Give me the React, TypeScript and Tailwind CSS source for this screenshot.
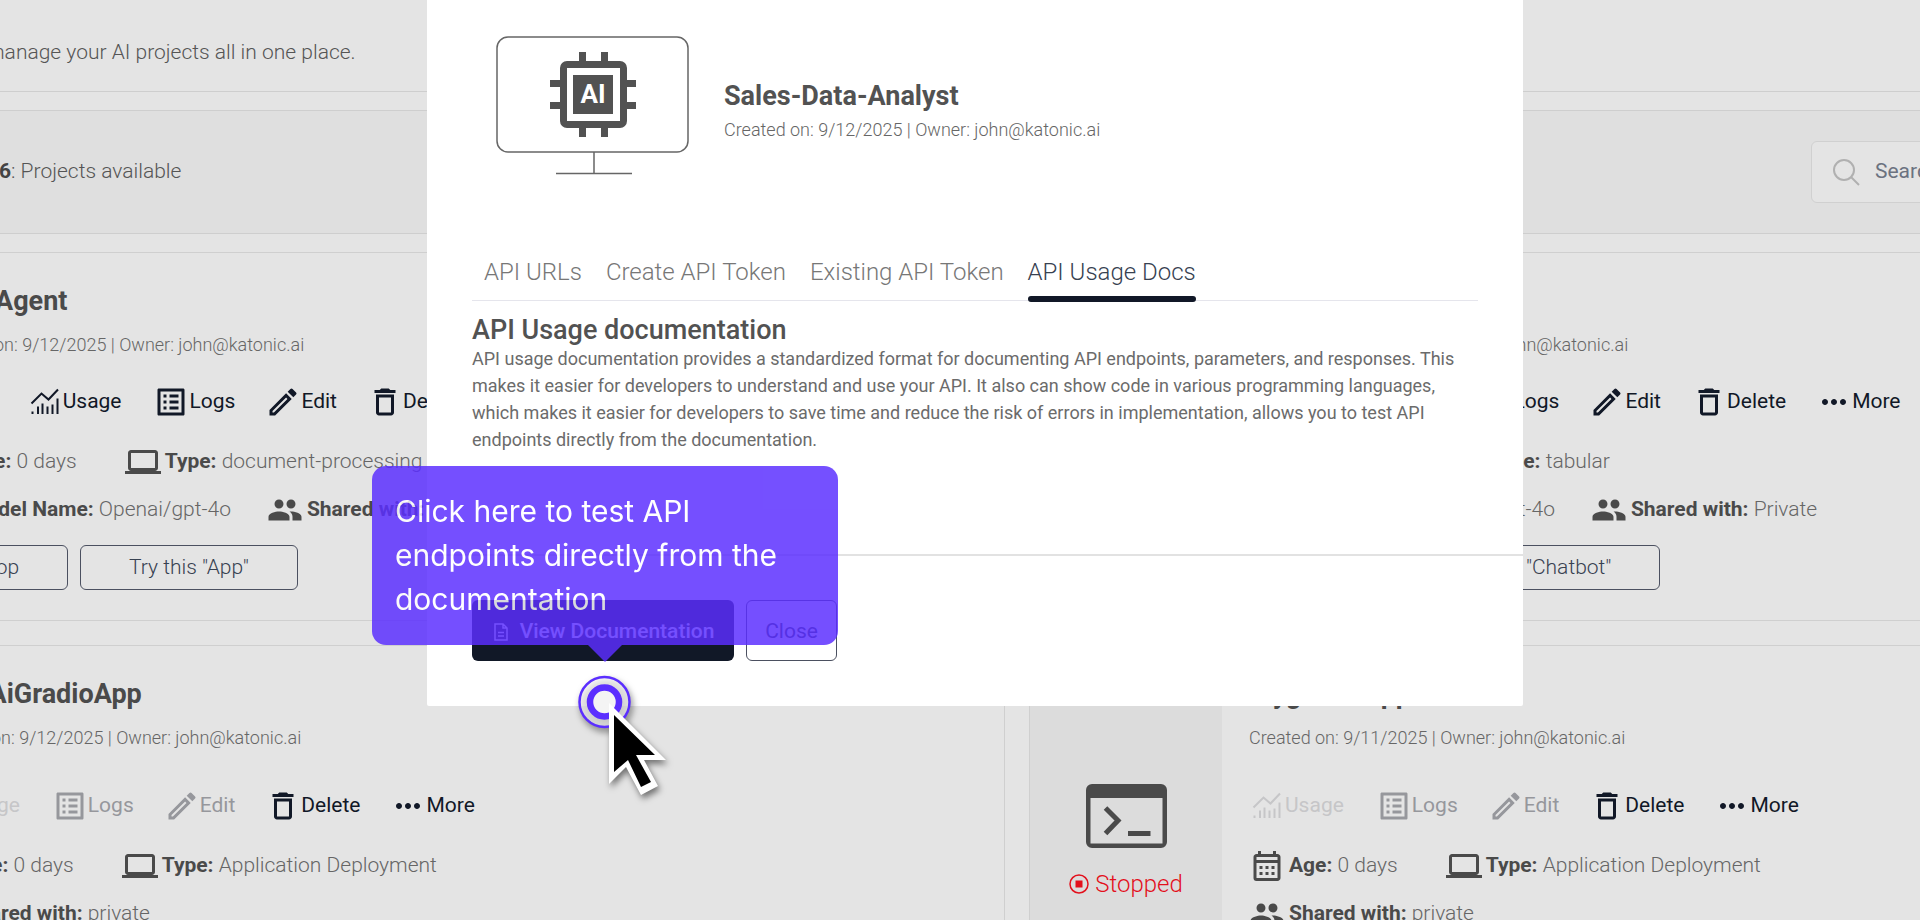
import React from 'react';
import {
    MdDeleteOutline,
    MdLaptop,
    MdMoreHoriz,
    MdOutlineCalendarMonth,
    MdOutlineListAlt,
    MdOutlineModeEdit,
    MdOutlinePsychology,
    MdPeople,
    MdOutlineApi
} from 'react-icons/md';

type Project = {
    title: string;
    created: string;
    type: string;
    model?: string;
    sharedWith: string;
    tryLabel?: string;
    stopped?: boolean;
};

const projects: Project[] = [
    { title: 'Chat-Agent', created: '9/12/2025', type: 'document-processing', model: 'Openai/gpt-4o', sharedWith: 'Private', tryLabel: 'Try this "App"' },
    { title: 'Sales-Data-Analyst', created: '9/12/2025', type: 'tabular', model: 'Openai/gpt-4o', sharedWith: 'Private', tryLabel: 'Try this "Chatbot"' },
    { title: 'OpenAiGradioApp', created: '9/12/2025', type: 'Application Deployment', sharedWith: 'private', stopped: true },
    { title: 'MygradioApp', created: '9/11/2025', type: 'Application Deployment', sharedWith: 'private', stopped: true },
];

const UsageIcon = () => (
    <svg viewBox="0 0 36 36" className="size-9" fill="none" stroke="currentColor" strokeWidth="2">
        <path d="M4.500 19.500 14.500 9.500 21.500 15.500 31 5.500" />
        <path d="M5.500 27.500V30M11 22.500V30M15.500 19.500V30M20.500 22.500V30M25.500 20.500V30M30.500 14.500V30" />
    </svg>
);

const TerminalIcon = () => (
    <svg viewBox="0 0 81 64" className="w-[81px] h-16" fill="none">
        <path fillRule="evenodd" fill="#4a4a4a" d="M6 0h69a6 6 0 0 1 6 6v52a6 6 0 0 1-6 6H6a6 6 0 0 1-6-6V6a6 6 0 0 1 6-6ZM4.500 14v45.500h72V14Z" />
        <path d="M19.500 24 32 36.500 19.500 49.500" stroke="#4a4a4a" strokeWidth="5" />
        <path d="M42 49.500h22.500" stroke="#4a4a4a" strokeWidth="5" />
    </svg>
);

const MonitorIcon = () => (
    <svg viewBox="0 0 194 140" className="w-[194px] h-[140px]" fill="none">
        <g stroke="#666" strokeWidth="1.500">
            <rect x="1" y="1" width="191" height="115" rx="11" fill="#fff" />
            <path d="M98 116v21M60 137.500h76" />
        </g>
        <g fill="#525252">
            <path d="M83 16h7v12h-7zM105 16h7v12h-7zM83 88h7v13h-7zM105 88h7v13h-7zM54 44h12v7H54zM54 66h12v7H54zM128 44h12v7h-12zM128 66h12v7h-12z" />
            <path fillRule="evenodd" d="M71 25h53a7 7 0 0 1 7 7v53a7 7 0 0 1-7 7H71a7 7 0 0 1-7-7V32a7 7 0 0 1 7-7ZM71 32v53h53V32Z" />
            <path d="M77 39h40v39H77z" />
        </g>
        <text x="97" y="67" textAnchor="middle" fill="#fff" className="font-['Roboto',sans-serif] text-[26px] font-bold">AI</text>
    </svg>
);

type ActionProps = {
    icon: React.ReactNode;
    label: string;
    className?: string;
}

const Action = ({ icon, label, className = 'text-[#111827]' }: ActionProps) => (
    <button className={`flex items-center h-9 text-[21px] ${className}`}>
        {icon}
        {label}
    </button>
);

type DetailProps = {
    icon: React.ReactNode;
    label: string;
    value: string;
}

const Detail = ({ icon, label, value }: DetailProps) => (
    <div className="flex items-center gap-1 h-9 whitespace-nowrap text-[21px] font-light text-[#666]">
        {icon}
        <span><b className="font-bold text-[#4a4a4a]">{label}:</b> {value}</span>
    </div>
);

const ProjectCard = ({ project }: { project: Project }) => {
    const { stopped } = project;

    return (
        <section className="flex border border-[#cfcfcf] bg-[#e4e4e4] min-h-[369px]">

            <div className="flex flex-col items-center w-48 shrink-0 bg-[#dcdcdc] pt-[138px]">
                <TerminalIcon />
                {stopped && (
                    <div className="flex items-center gap-1.5 mt-5 text-2xl font-light text-[#e3101c]">
                        <svg viewBox="0 0 20 20" className="size-5" fill="none">
                            <circle cx="10" cy="10" r="9" stroke="currentColor" strokeWidth="1.500" />
                            <path d="M6.500 6.500h7v7h-7z" fill="currentColor" />
                        </svg>
                        Stopped
                    </div>
                )}
            </div>

            <div className={stopped ? 'pt-8 pl-[27px]' : 'pt-8 pl-[30px]'}>
                <h2 className="text-[27px] leading-8 font-bold text-[#4a4a4a]">{project.title}</h2>
                <p className="mt-4 text-lg leading-6 font-light text-[#666]">Created on: {project.created} | Owner: john@katonic.ai</p>

                <div className={`flex gap-[30px] ${stopped ? 'mt-[38px]' : 'mt-[27px]'}`}>
                    {!stopped && <Action icon={<MdOutlineApi className="size-9" />} label="API" />}
                    <Action icon={<UsageIcon />} label="Usage" className={stopped ? 'pr-0.5 text-[#c6c6c8]' : 'pr-0.5 text-[#111827]'} />
                    <Action icon={<MdOutlineListAlt className="size-9" />} label="Logs" className={stopped ? 'text-[#96979c]' : 'text-[#111827]'} />
                    <Action icon={<MdOutlineModeEdit className="size-9" />} label="Edit" className={stopped ? 'text-[#96979c]' : 'text-[#111827]'} />
                    <Action icon={<MdDeleteOutline className="size-9" />} label="Delete" />
                    <Action icon={<MdMoreHoriz className="size-9" />} label="More" />
                </div>

                <div className="flex gap-12 mt-6">
                    <Detail icon={<MdOutlineCalendarMonth className="size-9 text-[#4a4a4a]" />} label="Age" value="0 days" />
                    <Detail icon={<MdLaptop className="size-9 text-[#4a4a4a]" />} label="Type" value={project.type} />
                </div>

                <div className="flex gap-9 mt-3">
                    {project.model && (
                        <Detail icon={<MdOutlinePsychology className="size-9 text-[#4a4a4a]" />} label="Model Name" value={project.model} />
                    )}
                    <Detail icon={<MdPeople className="size-9 text-[#4a4a4a]" />} label="Shared with" value={project.sharedWith} />
                </div>

                {project.tryLabel && (
                    <div className="flex gap-3 mt-[17px] text-[21px] font-light text-[#374151]">
                        <button className="w-[140px] h-[45px] rounded-md border border-[#4b5060]">Stop</button>
                        <button className="h-[45px] px-12 rounded-md border border-[#4b5060]">{project.tryLabel}</button>
                    </div>
                )}
            </div>

        </section>
    );
};

const tabs = ['API URLs', 'Create API Token', 'Existing API Token', 'API Usage Docs'];

const ApiDialog = () => (
    <div role="dialog" aria-label="Sales-Data-Analyst" className="w-[1096px] h-[706px] rounded-b-xs bg-white text-[#525252]">

        <div className="flex gap-[34px] pt-9 px-[69px]">
            <MonitorIcon />
            <div className="pt-11">
                <h2 className="text-[27px] leading-8 font-bold">Sales-Data-Analyst</h2>
                <p className="mt-1.5 text-lg leading-6 font-light text-[#666]">Created on: 9/12/2025 | Owner: john@katonic.ai</p>
            </div>
        </div>

        <div className="px-[45px] pt-[76px]">
            <div role="tablist" className="flex gap-6 h-[49px] pl-3 border-b border-[#e5e5ec]">
                {tabs.map((tab) => (
                    <button
                        key={tab}
                        role="tab"
                        aria-selected={tab === 'API Usage Docs'}
                        className="group flex flex-col justify-between h-[50px] pt-1 text-2xl font-light text-[#777] aria-selected:text-[#374151]"
                    >
                        {tab}
                        <span className="w-full h-1.5 rounded-full group-aria-selected:bg-[#111827]" />
                    </button>
                ))}
            </div>
            <h3 className="mt-[13px] text-[27px] leading-8 font-medium">API Usage documentation</h3>
            <p className="-mt-px text-lg leading-[27px] text-[#6b6b6b]">
                API usage documentation provides a standardized format for documenting API endpoints, parameters, and responses. This makes it easier for developers to understand and use your API. It also can show code in various programming languages, which makes it easier for developers to save time and reduce the risk of errors in implementation, allows you to test API endpoints directly from the documentation.
            </p>
        </div>

        <div className="flex gap-3 mt-[101px] px-[45px] pt-11 border-t-2 border-[#e2e2e2] text-[21px]">
            <button className="flex items-center justify-center gap-3 w-[262px] h-[61px] pt-0.5 pl-0.5 rounded-md bg-[#111827] text-white font-medium">
                <svg viewBox="0 0 14 18" className="w-3.5 h-[18px]" fill="none" stroke="currentColor" strokeWidth="1.500">
                    <path d="M1 1h8l4 4v12H1zM9 1v4h4M4 9.500h6M4 13h6" />
                </svg>
                View Documentation
            </button>
            <button className="w-[91px] h-[61px] pt-0.5 rounded-md border border-[#4b5060] text-[#374151]">Close</button>
        </div>

    </div>
);

const Hint = () => (
    <div className="absolute left-[372px] top-[466px] w-[466px] opacity-[.84]">
        <p className="px-[23px] pt-[23px] pb-6 rounded-[14px] bg-[#5b2eff] font-['Inter',sans-serif] text-[30px] leading-[44px] text-white">
            Click here to test API endpoints directly from the documentation
        </p>
        <svg viewBox="0 0 34 17" className="ml-[216px] w-[34px] h-[17px]" fill="#5b2eff">
            <path d="M0 0h34L17 17z" />
        </svg>
    </div>
);

const Pointer = () => (
    <svg viewBox="0 0 100 130" className="absolute left-[575px] top-[672px] w-[100px] h-[130px] drop-shadow-[2px_4px_3px_rgba(0,0,0,0.5)]" fill="none">
        <circle cx="29.500" cy="30" r="25" fill="#fff" fillOpacity=".6" stroke="#5b2eff" strokeWidth="2.500" />
        <circle cx="29.500" cy="30" r="14.500" fill="#f4f4f4" stroke="#5b2eff" strokeWidth="6.500" />
        <path d="M34 31v81l17-17 15 28 17-9-14-26h22z" fill="#fff" />
        <path d="M39 43v57l14-12 13 27 10-5-15-27h19z" fill="#000" />
    </svg>
);

const App = () => {

    return (
        <div className="relative h-screen overflow-hidden bg-[#e4e4e4] font-['Roboto',sans-serif]">

            {/* the board is panned, so its left and right edges run past the window */}
            <main className="-ml-[295px] -mr-[409px]">
                <header className="h-[92px] pt-9 pl-[281px] border-b border-[#cecece]">
                    <p className="text-[21px] leading-8 font-light text-[#555]">manage your AI projects all in one place.</p>
                </header>

                <div className="flex items-center justify-between h-[124px] mt-[18px] pl-[294px] pr-[80px] border-y border-[#cecece] bg-[#dfdfdf]">
                    <p className="text-[21px] font-light text-[#555]"><b className="font-bold text-[#444]">6</b>: Projects available</p>
                    <label className="flex items-center gap-[15px] w-[438px] h-[62px] pl-[21px] rounded-md border border-[#d0d0d0] bg-[#e4e4e4]">
                        <svg viewBox="0 0 27 27" className="size-[27px] shrink-0" fill="none" stroke="#b0b0b0" strokeWidth="2">
                            <circle cx="11" cy="11" r="10" />
                            <path d="m18 18 8 8" />
                        </svg>
                        <input type="search" aria-label="Search" placeholder="Search" className="w-full bg-transparent text-[21px] outline-none placeholder:text-[#6b7280]" />
                    </label>
                </div>

                <div className="grid grid-cols-2 gap-x-6 gap-y-6 mt-[18px]">
                    {projects.map((project) => (
                        <ProjectCard key={project.title} project={project} />
                    ))}
                </div>
            </main>

            <div className="absolute inset-0 flex items-start justify-center pl-[30px]">
                <ApiDialog />
            </div>

            <Hint />
            <Pointer />

        </div>
    );
};

export default App;
